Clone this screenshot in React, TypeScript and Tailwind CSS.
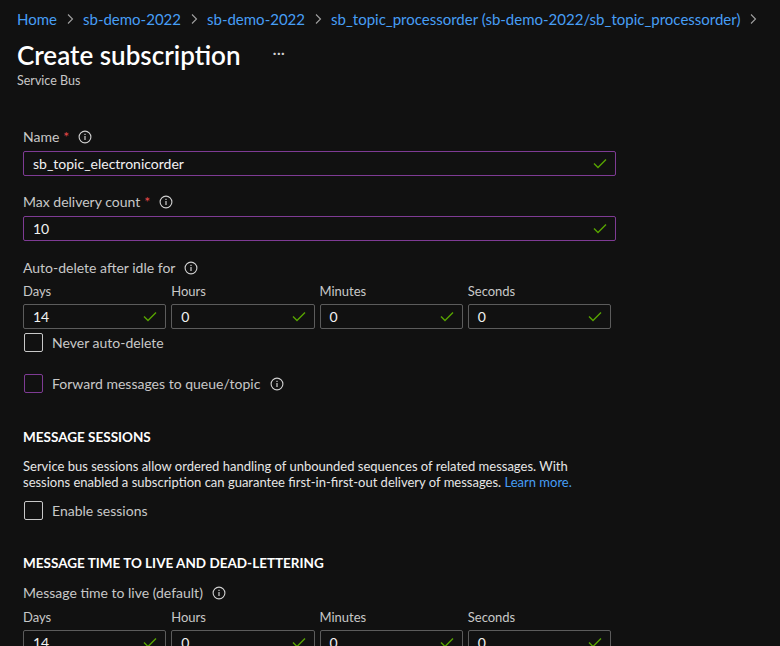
import React from 'react';

const font = { fontFamily: '"Segoe UI", Lato, "Noto Sans", sans-serif' };

function Info() {
  return (
    <svg width="14" height="14" viewBox="0 0 14 14" className="inline-block" fill="none">
      <circle cx="7" cy="7" r="5.9" stroke="#d0d0d0" strokeWidth="1.1" />
      <rect x="6.4" y="6" width="1.2" height="4" fill="#d0d0d0" />
      <rect x="6.4" y="3.8" width="1.2" height="1.2" fill="#d0d0d0" />
    </svg>
  );
}

function Check() {
  return (
    <svg width="14" height="11" viewBox="0 0 14 11" fill="none">
      <path d="M1 5.5 L5 9.5 L13 1.5" stroke="#57a300" strokeWidth="1.4" />
    </svg>
  );
}

function Chevron() {
  return (
    <svg width="8" height="12" viewBox="0 0 8 12" fill="none" className="mx-[9px]">
      <path d="M2 1.5 L6.5 6 L2 10.5" stroke="#a0a0a0" strokeWidth="1.1" />
    </svg>
  );
}

function TextInput({ value, purple }: { value: string; purple?: boolean }) {
  return (
    <div
      className={`flex items-center justify-between h-[25px] pl-[9px] pr-[8px] rounded-[2px] border ${
        purple ? 'border-[#7e3b94]' : 'border-[#5c5c5c]'
      }`}
    >
      <span className="text-[14px] leading-[20px] text-[#f2f2f2]">{value}</span>
      <Check />
    </div>
  );
}

function Duration({ values }: { values: string[] }) {
  const labels = ['Days', 'Hours', 'Minutes', 'Seconds'];
  return (
    <div className="grid grid-cols-4 gap-[5px] w-[588px]">
      {labels.map((l, i) => (
        <div key={l}>
          <div className="text-[13px] text-[#c8c8c8] h-[20px] leading-[20px] mb-[3px]">{l}</div>
          <TextInput value={values[i]} />
        </div>
      ))}
    </div>
  );
}

function Checkbox({ label, purple, info }: { label: string; purple?: boolean; info?: boolean }) {
  return (
    <div className="flex items-center gap-[9px] h-[21px]">
      <div
        className={`w-[19px] h-[19px] rounded-[2px] border ${purple ? 'border-[#7e3b94]' : 'border-[#c8c8c8]'}`}
      />
      <span className="text-[14px] leading-[21px] text-[#c8c8c8]">{label}</span>
      {info && (
        <span className="ml-[1px] flex">
          <Info />
        </span>
      )}
    </div>
  );
}

function Label({ text, required }: { text: string; required?: boolean }) {
  return (
    <div className="flex items-center h-[20px] text-[14px] leading-[20px] text-[#c8c8c8] mb-[4px]">
      <span>{text}</span>
      {required && <span className="text-[#e8484a] ml-[4px]">*</span>}
      <span className="ml-[9px] flex">
        <Info />
      </span>
    </div>
  );
}

export default function App() {
  return (
    <div className="w-[780px] h-[646px] overflow-hidden bg-[#111111] text-white" style={font}>
      <div className="pl-[17px] pt-[8px]">
        <div className="flex items-center text-[15px] leading-[22px] text-[#479ef5] h-[22px] whitespace-nowrap">
          <span>Home</span>
          <Chevron />
          <span>sb-demo-2022</span>
          <Chevron />
          <span>sb-demo-2022</span>
          <Chevron />
          <span>sb_topic_processorder (sb-demo-2022/sb_topic_processorder)</span>
          <Chevron />
        </div>
        <div className="flex items-center mt-[8px] h-[34px]">
          <h1 className="text-[26px] leading-[34px] font-semibold text-white">Create subscription</h1>
          <span className="ml-[32px] text-[16px] text-[#d0d0d0] -mt-[6px]">···</span>
        </div>
        <div className="text-[12.5px] leading-[18px] text-[#c8c8c8]">Service Bus</div>
      </div>

      <div className="pl-[23px] pt-[37px]">
        <Label text="Name" required />
        <div className="w-[593px]">
          <TextInput value="sb_topic_electronicorder" purple />
        </div>

        <div className="mt-[16px]">
          <Label text="Max delivery count" required />
          <div className="w-[593px]">
            <TextInput value="10" purple />
          </div>
        </div>

        <div className="mt-[17px]">
          <div className="-mb-[1px]">
            <Label text="Auto-delete after idle for" />
          </div>
          <Duration values={['14', '0', '0', '0']} />
          <div className="mt-[3px] pl-[1px]">
            <Checkbox label="Never auto-delete" />
          </div>
          <div className="mt-[20px] pl-[1px]">
            <Checkbox label="Forward messages to queue/topic" purple info />
          </div>
        </div>

        <div className="mt-[33px]">
          <div className="text-[13.5px] leading-[20px] font-bold text-white uppercase">Message sessions</div>
          <p className="mt-[11px] text-[13px] leading-[16px] text-[#e6e6e6] w-[580px]">
            Service bus sessions allow ordered handling of unbounded sequences of related messages. With
            <br />
            sessions enabled a subscription can guarantee first-in-first-out delivery of messages.{' '}
            <span className="text-[#479ef5]">Learn more.</span>
          </p>
          <div className="mt-[10px] pl-[1px]">
            <Checkbox label="Enable sessions" />
          </div>
        </div>

        <div className="mt-[32px]">
          <div className="text-[13.5px] leading-[20px] font-bold text-white uppercase">
            Message time to live and dead-lettering
          </div>
          <div className="mt-[10px]">
            <Label text="Message time to live (default)" />
            <Duration values={['14', '0', '0', '0']} />
          </div>
        </div>
      </div>
    </div>
  );
}
